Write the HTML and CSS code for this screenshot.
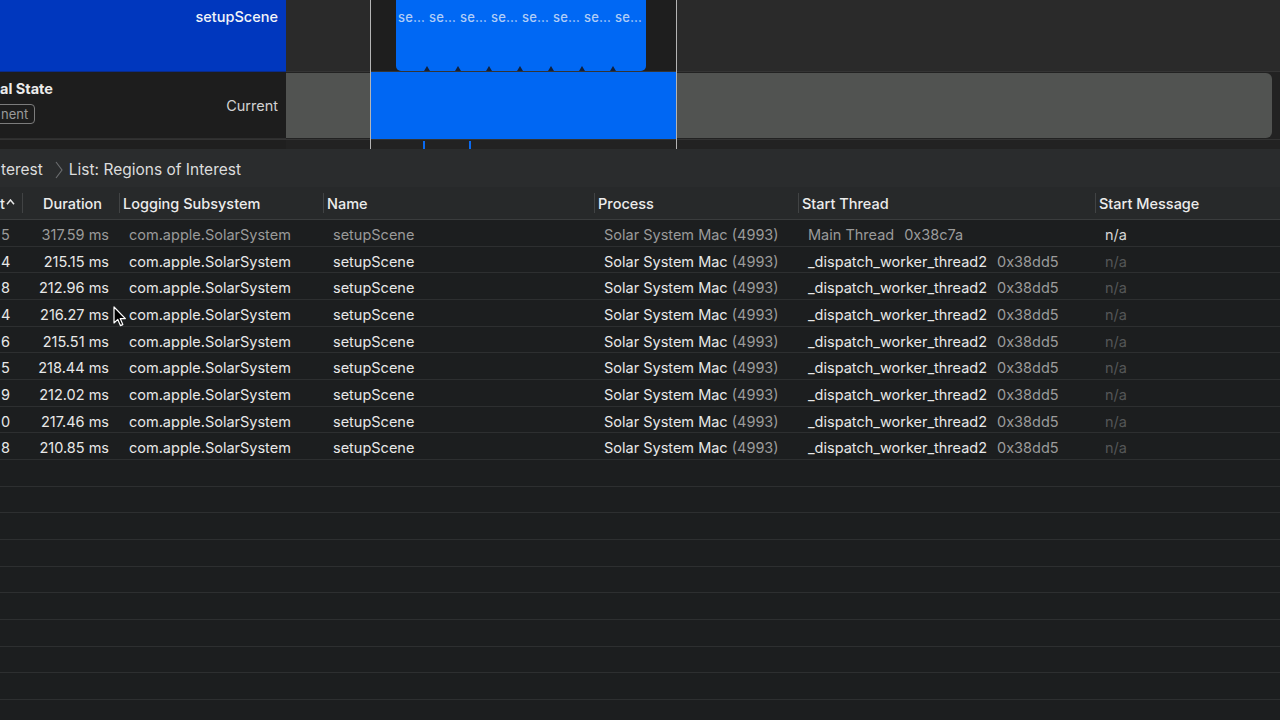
FILE: index.html
```html
<!DOCTYPE html>
<html lang="en">
<head>
<meta charset="utf-8">
<title>Regions of Interest</title>
<link rel="stylesheet" href="styles.css">
</head>
<body>
<div class="app">
  <section class="tracks">
    <div class="track track-roi">
      <div class="track-label label-blue">
        <span class="label-title">setupScene</span>
      </div>
      <div class="lane lane-roi">
        <div class="sel-dark" style="left:84px;width:306px"></div>
        <div class="interval" style="left:110px;width:250px">
          <span class="seg">se…</span>
          <span class="seg">se…</span>
          <span class="seg">se…</span>
          <span class="seg">se…</span>
          <span class="seg">se…</span>
          <span class="seg">se…</span>
          <span class="seg">se…</span>
          <span class="seg">se…</span>
        </div>
      </div>
    </div>
    <div class="track track-state">
      <div class="track-label label-dark">
        <div class="state-name">
          <span class="state-title">al State</span>
          <span class="badge">nent</span>
        </div>
        <span class="state-value">Current</span>
      </div>
      <div class="lane lane-state">
        <div class="state-bar"></div>
        <div class="state-blue" style="left:84px;width:306px"></div>
      </div>
    </div>
    <div class="track track-mini">
      <div class="track-label label-mini"></div>
      <div class="lane lane-mini">
        <i class="tick" style="left:137px"></i>
        <i class="tick" style="left:183px"></i>
      </div>
    </div>
    <i class="vline" style="left:370px"></i>
    <i class="vline" style="left:676px"></i>
  </section>

  <nav class="crumbs">
    <span class="crumb">terest</span>
    <svg class="chev" width="8" height="18" viewBox="0 0 8 18"><polyline points="1,1 7,9 1,17" fill="none" stroke="#6c6e70" stroke-width="1.1"/></svg>
    <span class="crumb">List: Regions of Interest</span>
  </nav>

  <section class="table">
    <div class="row head">
      <div class="hc hc-first">t<svg class="sort" width="9" height="6" viewBox="0 0 9 6"><polyline points="1,5.2 4.5,1 8,5.2" fill="none" stroke="#e6e6e6" stroke-width="1.5"/></svg></div>
      <div class="hc hc-dur">Duration</div>
      <div class="hc">Logging Subsystem</div>
      <div class="hc">Name</div>
      <div class="hc">Process</div>
      <div class="hc">Start Thread</div>
      <div class="hc">Start Message</div>
    </div>

    <div class="row data dim">
      <div class="c c-first">5</div>
      <div class="c c-dur">317.59 ms</div>
      <div class="c">com.apple.SolarSystem</div>
      <div class="c">setupScene</div>
      <div class="c">Solar System Mac (4993)</div>
      <div class="c">Main Thread<span class="tid">0x38c7a</span></div>
      <div class="c na-light">n/a</div>
    </div>
    <div class="row data">
      <div class="c c-first">4</div>
      <div class="c c-dur">215.15 ms</div>
      <div class="c">com.apple.SolarSystem</div>
      <div class="c">setupScene</div>
      <div class="c">Solar System Mac <span class="pid">(4993)</span></div>
      <div class="c">_dispatch_worker_thread2<span class="tid">0x38dd5</span></div>
      <div class="c na">n/a</div>
    </div>
    <div class="row data">
      <div class="c c-first">8</div>
      <div class="c c-dur">212.96 ms</div>
      <div class="c">com.apple.SolarSystem</div>
      <div class="c">setupScene</div>
      <div class="c">Solar System Mac <span class="pid">(4993)</span></div>
      <div class="c">_dispatch_worker_thread2<span class="tid">0x38dd5</span></div>
      <div class="c na">n/a</div>
    </div>
    <div class="row data">
      <div class="c c-first">4</div>
      <div class="c c-dur">216.27 ms</div>
      <div class="c">com.apple.SolarSystem</div>
      <div class="c">setupScene</div>
      <div class="c">Solar System Mac <span class="pid">(4993)</span></div>
      <div class="c">_dispatch_worker_thread2<span class="tid">0x38dd5</span></div>
      <div class="c na">n/a</div>
    </div>
    <div class="row data">
      <div class="c c-first">6</div>
      <div class="c c-dur">215.51 ms</div>
      <div class="c">com.apple.SolarSystem</div>
      <div class="c">setupScene</div>
      <div class="c">Solar System Mac <span class="pid">(4993)</span></div>
      <div class="c">_dispatch_worker_thread2<span class="tid">0x38dd5</span></div>
      <div class="c na">n/a</div>
    </div>
    <div class="row data">
      <div class="c c-first">5</div>
      <div class="c c-dur">218.44 ms</div>
      <div class="c">com.apple.SolarSystem</div>
      <div class="c">setupScene</div>
      <div class="c">Solar System Mac <span class="pid">(4993)</span></div>
      <div class="c">_dispatch_worker_thread2<span class="tid">0x38dd5</span></div>
      <div class="c na">n/a</div>
    </div>
    <div class="row data">
      <div class="c c-first">9</div>
      <div class="c c-dur">212.02 ms</div>
      <div class="c">com.apple.SolarSystem</div>
      <div class="c">setupScene</div>
      <div class="c">Solar System Mac <span class="pid">(4993)</span></div>
      <div class="c">_dispatch_worker_thread2<span class="tid">0x38dd5</span></div>
      <div class="c na">n/a</div>
    </div>
    <div class="row data">
      <div class="c c-first">0</div>
      <div class="c c-dur">217.46 ms</div>
      <div class="c">com.apple.SolarSystem</div>
      <div class="c">setupScene</div>
      <div class="c">Solar System Mac <span class="pid">(4993)</span></div>
      <div class="c">_dispatch_worker_thread2<span class="tid">0x38dd5</span></div>
      <div class="c na">n/a</div>
    </div>
    <div class="row data">
      <div class="c c-first">8</div>
      <div class="c c-dur">210.85 ms</div>
      <div class="c">com.apple.SolarSystem</div>
      <div class="c">setupScene</div>
      <div class="c">Solar System Mac <span class="pid">(4993)</span></div>
      <div class="c">_dispatch_worker_thread2<span class="tid">0x38dd5</span></div>
      <div class="c na">n/a</div>
    </div>

    <div class="row empty"></div>
    <div class="row empty"></div>
    <div class="row empty"></div>
    <div class="row empty"></div>
    <div class="row empty"></div>
    <div class="row empty"></div>
    <div class="row empty"></div>
    <div class="row empty"></div>
    <div class="row empty"></div>
    <div class="row empty"></div>
  </section>

  <svg class="cursor" width="14" height="22" viewBox="0 0 14 22">
    <path d="M1 1 L1 17 L4.8 13.4 L7.4 19.6 L9.8 18.6 L7.2 12.6 L12.4 12.6 Z" fill="#000" stroke="#fff" stroke-width="1.2" stroke-linejoin="round"/>
  </svg>
</div>
</body>
</html>
```

FILE: styles.css
```css
* { box-sizing: border-box; }

html, body {
  margin: 0;
  padding: 0;
  background: #1c1e1f;
  width: 1280px;
  height: 720px;
  overflow: hidden;
  font-family: "Inter", "Liberation Sans", sans-serif;
  -webkit-font-smoothing: antialiased;
}

.app {
  position: relative;
  width: 1280px;
  height: 720px;
  overflow: hidden;
  display: flex;
  flex-direction: column;
}

/* ---------- tracks ---------- */
.tracks {
  position: relative;
  display: flex;
  flex-direction: column;
  flex: none;
}

.track {
  display: flex;
}

.track-label {
  width: 286px;
  flex: none;
}

.lane {
  position: relative;
  flex: 1;
}

.track-roi { height: 72px; }
.track-state { height: 67px; }
.track-mini { height: 10px; }

.label-blue {
  background: #0037be;
  display: flex;
  justify-content: flex-end;
  padding: 7px 8px 0 0;
  border-bottom: 1px solid #0a2b8a;
}

.label-title {
  color: #f2f4f8;
  font-size: 14.5px;
  font-weight: 500;
  line-height: 20px;
}

.lane-roi {
  background: #2a2a2a;
  border-bottom: 1px solid #343434;
}

.sel-dark {
  position: absolute;
  top: 0;
  bottom: 0;
  background: #1e1e1e;
}

.interval {
  position: absolute;
  top: 0;
  height: 71px;
  background: #0068f4;
  border-radius: 0 0 5px 5px;
  display: flex;
  padding-left: 2px;
}

.seg {
  position: relative;
  flex: 1;
  color: #b0cdf7;
  font-size: 13px;
  font-weight: 500;
  line-height: 14px;
  padding-top: 10px;
  letter-spacing: 0.2px;
  white-space: nowrap;
}

.seg:not(:last-child)::after {
  content: "";
  position: absolute;
  right: -1px;
  bottom: 0;
  width: 0;
  height: 0;
  border-left: 3px solid transparent;
  border-right: 3px solid transparent;
  border-bottom: 5px solid #10213f;
}

.label-dark {
  background: #1d1d1d;
  display: flex;
  justify-content: space-between;
  padding: 0 8px 0 0;
  border-bottom: 1px solid #2e2e2e;
}

.state-name {
  display: flex;
  flex-direction: column;
  align-items: flex-start;
  padding-top: 7px;
}

.state-title {
  color: #ececec;
  font-size: 14.5px;
  font-weight: 700;
  line-height: 20px;
}

.badge {
  margin-top: 5px;
  margin-left: -6px;
  border: 1px solid #7c7c7c;
  border-radius: 4px;
  color: #9a9a9a;
  font-size: 13px;
  line-height: 18px;
  padding: 0 6px 0 6px;
}

.state-value {
  color: #d2d2d2;
  font-size: 14.5px;
  line-height: 20px;
  padding-top: 24px;
}

.lane-state {
  background: #222222;
}

.state-bar {
  position: absolute;
  left: 0;
  right: 8px;
  top: 1px;
  bottom: 1px;
  background: #515351;
  border-radius: 0 6px 6px 0;
}

.state-blue {
  position: absolute;
  top: 0;
  bottom: 0;
  background: #0067f3;
}

.label-mini {
  background: #1f1f1f;
  border-top: 1px solid #333;
}

.lane-mini {
  background: #222;
  border-top: 1px solid #333;
}

.tick {
  position: absolute;
  top: 1px;
  width: 2px;
  height: 8px;
  background: #0a6af0;
}

.vline {
  position: absolute;
  top: 0;
  height: 149px;
  width: 1px;
  background: #b4b4b4;
}

/* ---------- breadcrumbs ---------- */
.crumbs {
  flex: none;
  height: 38px;
  background: #2a2c2d;
  display: flex;
  align-items: center;
  gap: 6px;
  padding: 3px 0 0 1px;
}

.crumb {
  color: #dcdddd;
  font-size: 15.5px;
  line-height: 20px;
}

.chev {
  margin-left: 6px;
}

/* ---------- table ---------- */
.table {
  flex: 1;
  display: flex;
  flex-direction: column;
}

.row {
  display: grid;
  grid-template-columns: 22px 97px 204px 271px 204px 297px 1fr;
  flex: none;
}

.head {
  height: 33px;
  background: #27292a;
  border-bottom: 1px solid #3a3c3d;
}

.hc {
  position: relative;
  color: #ececec;
  font-size: 14.5px;
  font-weight: 500;
  line-height: 30px;
  padding-top: 2px;
  padding-left: 4px;
  white-space: nowrap;
}

.hc + .hc::before {
  content: "";
  position: absolute;
  left: 0;
  top: 6px;
  bottom: 6px;
  width: 1px;
  background: #414344;
}

.hc-first {
  padding-left: 0;
  display: flex;
  align-items: center;
  gap: 1px;
}

.sort { margin-top: -4px; }

.hc-dur { padding-left: 21px; }

.data, .empty {
  height: 26.67px;
  border-bottom: 1px solid #2d2f30;
  background: #1c1e1f;
}

.c {
  color: #e8e8e8;
  font-size: 14.5px;
  line-height: 20px;
  padding-top: 5px;
  padding-left: 10px;
  white-space: nowrap;
  overflow: hidden;
}

.c-first { padding-left: 1px; }

.c-dur {
  text-align: right;
  padding-left: 0;
  padding-right: 10px;
}

.pid, .tid { color: #9b9b9b; }
.tid { margin-left: 10px; }

.dim .c { color: #9a9a9a; }
.dim .c.na-light { color: #d6d6d6; font-weight: 400; }

.na { color: #545657; }

/* ---------- pointer ---------- */
.cursor {
  position: absolute;
  left: 113px;
  top: 306px;
}
```
